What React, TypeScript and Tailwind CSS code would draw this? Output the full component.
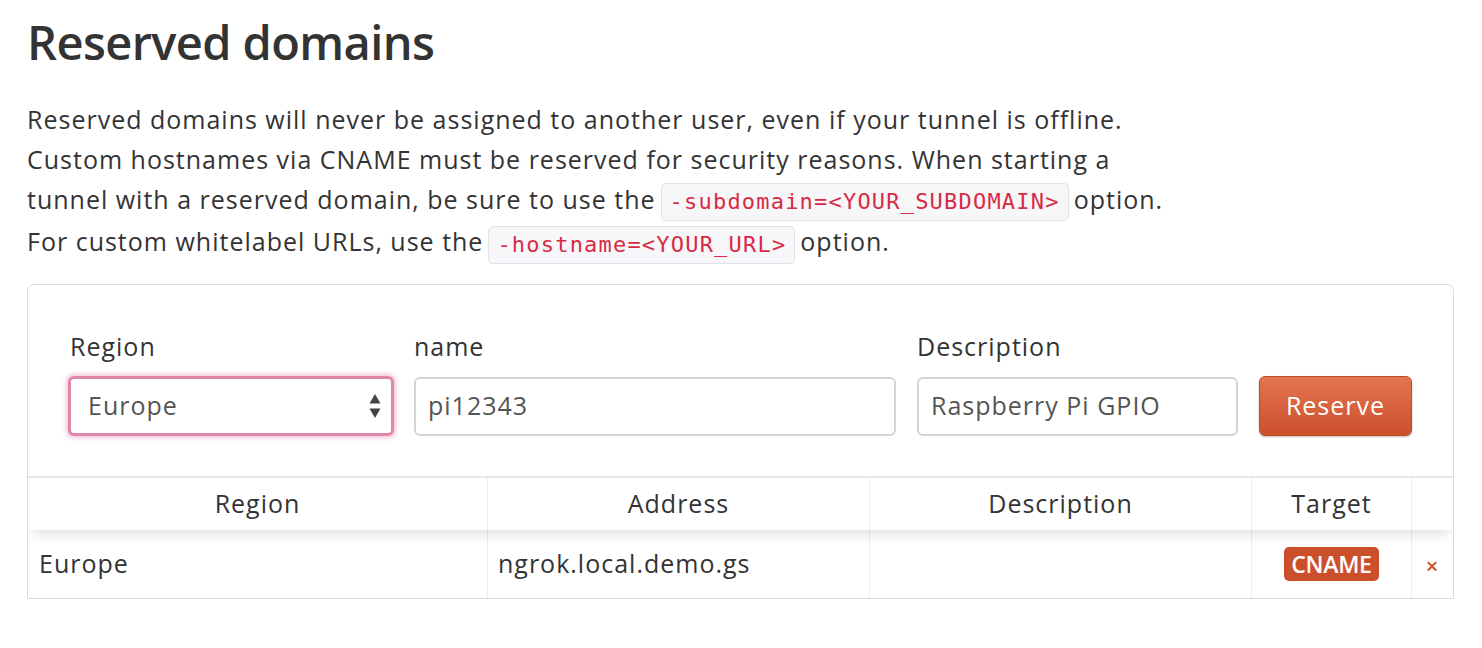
import React from 'react';

const Code: React.FC<{ children: React.ReactNode }> = ({ children }) => (
  <code className="inline-block align-middle mx-[5px] px-[8px] py-[3px] leading-[30px] rounded-[5px] border border-[#e1e1e8] bg-[#f7f7f9] text-[#d72b45] text-[22px] tracking-[1.2px] [font-family:'DejaVu_Sans_Mono',monospace]">
    {children}
  </code>
);

const SelectArrows = () => (
  <svg width="12" height="26" viewBox="0 0 12 26" className="text-[#444]">
    <path d="M6 1 L11.5 10.5 H0.5 Z" fill="currentColor" />
    <path d="M6 25 L11.5 15.5 H0.5 Z" fill="currentColor" />
  </svg>
);

const App: React.FC = () => {
  return (
    <div className="w-[1482px] h-[648px] bg-white text-[#333] [font-family:'Open_Sans',sans-serif] px-[27px] pt-[10px]">
      <h1 className="text-[47px] leading-[64px] font-semibold tracking-[-0.6px]">Reserved domains</h1>

      <p className="mt-[25px] text-[25px] tracking-[1px] leading-[40px] whitespace-nowrap">
        Reserved domains will never be assigned to another user, even if your tunnel is offline.
        <br />
        Custom hostnames via CNAME must be reserved for security reasons. When starting a
        <br />
        tunnel with a reserved domain, be sure to use the<Code>-subdomain=&lt;YOUR_SUBDOMAIN&gt;</Code>option.
        <br />
        For custom whitelabel URLs, use the<Code>-hostname=&lt;YOUR_URL&gt;</Code>option.
      </p>

      <div className="mt-[20px] w-[1427px] border border-[#dcdcdc] rounded-t-[7px] overflow-hidden text-[25px] tracking-[1px]">
        <div className="flex items-end pl-[40px] pr-[41px] pt-[46px] pb-[40px] gap-[20px]">
          <div className="w-[326px] flex flex-col">
            <label className="leading-[30px] mb-[15px] pl-[2px]">Region</label>
            <div className="h-[60px] rounded-[6px] border-[3px] border-[#df86aa] shadow-[0_0_4px_2px_rgba(232,150,185,0.55)] bg-white flex items-center justify-between pl-[17px] pr-[10px]">
              <span className="text-[#555]">Europe</span>
              <SelectArrows />
            </div>
          </div>
          <div className="w-[482px] flex flex-col">
            <label className="leading-[30px] mb-[16px]">name</label>
            <div className="h-[59px] rounded-[6px] border-2 border-[#d4d4d4] bg-white flex items-center px-[12px]">
              <span className="text-[#555]">pi12343</span>
            </div>
          </div>
          <div className="w-[321px] flex flex-col ml-[1px]">
            <label className="leading-[30px] mb-[16px]">Description</label>
            <div className="h-[59px] rounded-[6px] border-2 border-[#d4d4d4] bg-white flex items-center px-[12px]">
              <span className="text-[#555]">Raspberry Pi GPIO</span>
            </div>
          </div>
          <button className="ml-[1px] w-[153px] h-[60px] rounded-[6px] border border-[#c04a28] bg-gradient-to-b from-[#e3764f] to-[#cc4f2c] text-white shadow-[0_1px_2px_rgba(0,0,0,0.25)]">
            Reserve
          </button>
        </div>

        <div className="border-t-2 border-[#e6e6e6]">
          <div className="flex h-[52px] relative z-10 bg-white shadow-[0_8px_12px_-4px_rgba(0,0,0,0.12)]">
            <div className="w-[460px] border-r border-[#ececec] flex items-center justify-center">Region</div>
            <div className="w-[382px] border-r border-[#ececec] flex items-center justify-center">Address</div>
            <div className="w-[382px] border-r border-[#ececec] flex items-center justify-center">Description</div>
            <div className="w-[160px] border-r border-[#ececec] flex items-center justify-center">Target</div>
            <div className="flex-1" />
          </div>
          <div className="flex h-[68px]">
            <div className="w-[460px] border-r border-[#ececec] flex items-center pl-[11px]">Europe</div>
            <div className="w-[382px] border-r border-[#ececec] flex items-center pl-[10px]">ngrok.local.demo.gs</div>
            <div className="w-[382px] border-r border-[#ececec]" />
            <div className="w-[160px] border-r border-[#ececec] flex items-center justify-center">
              <span className="bg-[#cc4f2c] text-white font-semibold text-[23px] leading-[34px] px-[7px] rounded-[5px] tracking-[-0.3px]">CNAME</span>
            </div>
            <div className="flex-1 flex items-center justify-center pt-[4px]">
              <span className="text-[#d0502a] text-[22px] font-semibold">×</span>
            </div>
          </div>
        </div>
      </div>
    </div>
  );
};

export default App;
